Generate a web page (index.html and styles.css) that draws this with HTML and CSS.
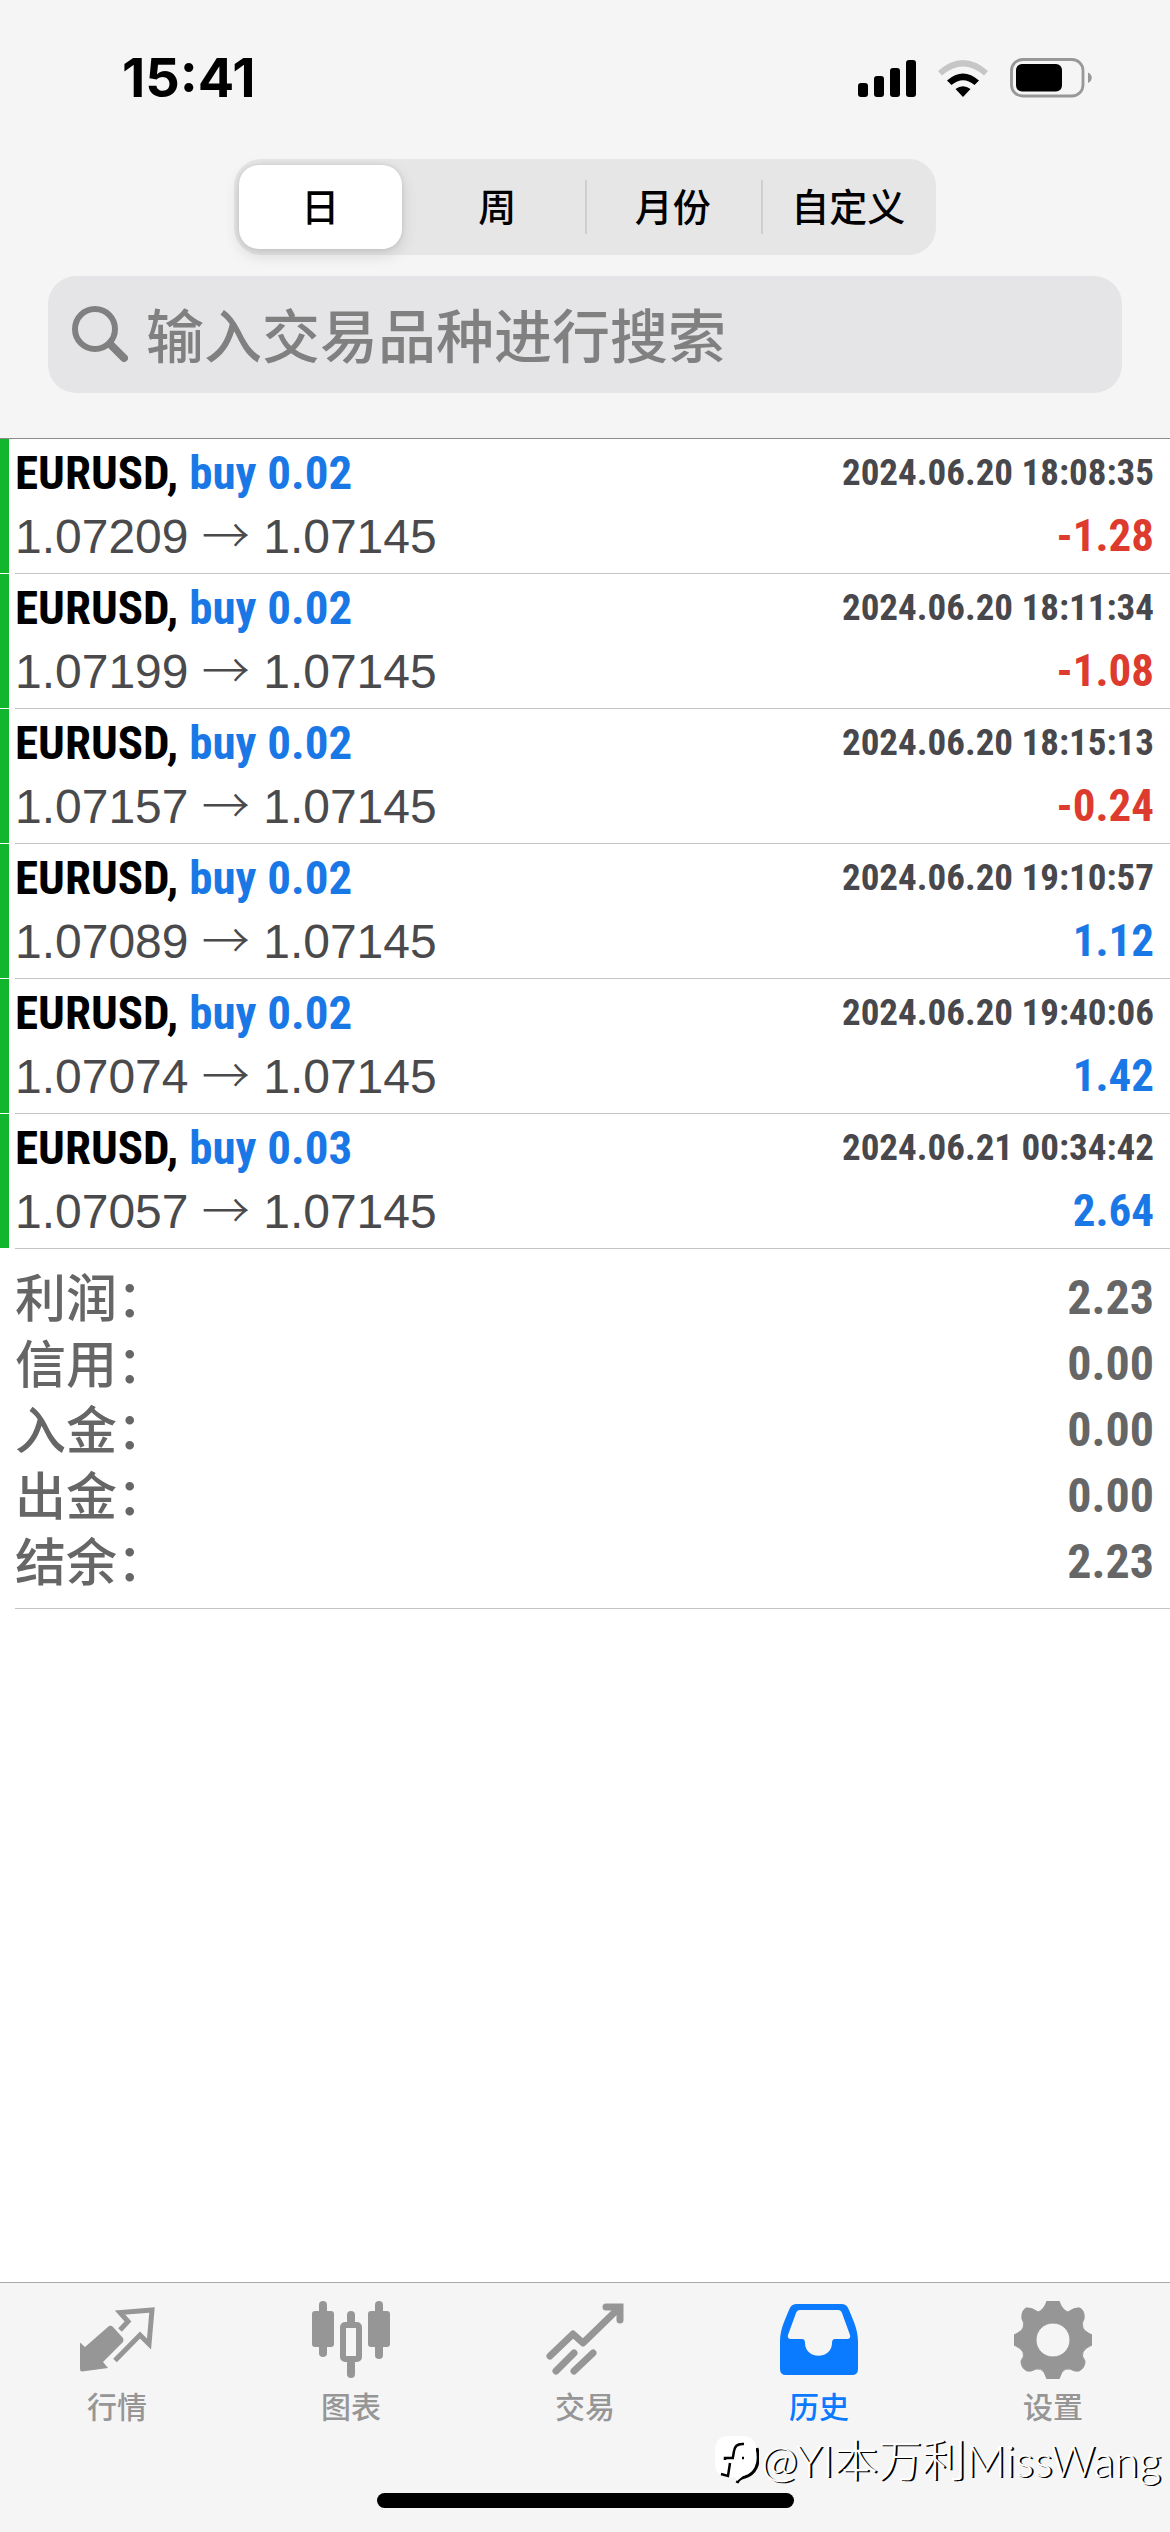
FILE: index.html
```html
<!DOCTYPE html>
<html lang="zh-CN">
<head>
<meta charset="utf-8">
<meta name="viewport" content="width=device-width, initial-scale=1">
<title>历史</title>
<link rel="stylesheet" href="styles.css">
</head>
<body>
<div class="app">
  <header class="header">
    <div class="status">
      <time class="clock">15:41</time>
      <div class="status-icons">
        <svg width="58" height="38" viewBox="0 0 58 38" aria-hidden="true">
          <rect x="0" y="24" width="10" height="14" rx="3"/>
          <rect x="16" y="17" width="10" height="21" rx="3"/>
          <rect x="32" y="9" width="10" height="29" rx="3"/>
          <rect x="48" y="1" width="10" height="37" rx="3"/>
        </svg>
        <svg width="50" height="38" viewBox="0 0 50 38" aria-hidden="true">
          <path d="M0 12Q25 -10 50 12L46 16.500Q25 -1.500 4 16.500Z" fill="#c6c6c6"/>
          <path d="M9 21.500Q25 7.500 41 21.500L36.500 26Q25 16.500 13.500 26Z"/>
          <path d="M17.500 30Q25 24.500 32.500 30L25 38Z"/>
        </svg>
        <svg width="82" height="40" viewBox="0 0 82 40" aria-hidden="true">
          <rect x="1.500" y="1.500" width="71.500" height="36.500" rx="11" fill="none" stroke="#989898" stroke-width="2.800"/>
          <rect x="6" y="6" width="46" height="27.500" rx="6"/>
          <path d="M78 14.500C83 16.500 83 23 78 25Z" fill="#989898"/>
        </svg>
      </div>
    </div>
    <div class="segments" role="group" aria-label="时间范围">
      <button class="segment segment-active" type="button" aria-pressed="true">日</button>
      <button class="segment" type="button">周</button>
      <button class="segment segment-divided" type="button">月份</button>
      <button class="segment segment-divided" type="button">自定义</button>
    </div>
    <label class="search">
      <svg width="56" height="57" viewBox="0 0 56 57" fill="none" stroke="#808080" aria-hidden="true">
        <circle cx="23" cy="23" r="20" stroke-width="6"/>
        <path d="M38 38L52 52" stroke-width="8" stroke-linecap="round"/>
      </svg>
      <input class="search-input" type="search" placeholder="输入交易品种进行搜索" aria-label="输入交易品种进行搜索">
    </label>
  </header>

  <main class="content">
    <ul class="deals">
      <li class="deal"><div class="deal-body">
        <p class="line"><span class="symbol">EURUSD, <span class="side">buy 0.02</span></span><time class="date">2024.06.20 18:08:35</time></p>
        <p class="line"><span class="prices">1.07209 <span class="arrow">→</span> 1.07145</span><span class="profit loss">-1.28</span></p>
      </div></li>
      <li class="deal"><div class="deal-body">
        <p class="line"><span class="symbol">EURUSD, <span class="side">buy 0.02</span></span><time class="date">2024.06.20 18:11:34</time></p>
        <p class="line"><span class="prices">1.07199 <span class="arrow">→</span> 1.07145</span><span class="profit loss">-1.08</span></p>
      </div></li>
      <li class="deal"><div class="deal-body">
        <p class="line"><span class="symbol">EURUSD, <span class="side">buy 0.02</span></span><time class="date">2024.06.20 18:15:13</time></p>
        <p class="line"><span class="prices">1.07157 <span class="arrow">→</span> 1.07145</span><span class="profit loss">-0.24</span></p>
      </div></li>
      <li class="deal"><div class="deal-body">
        <p class="line"><span class="symbol">EURUSD, <span class="side">buy 0.02</span></span><time class="date">2024.06.20 19:10:57</time></p>
        <p class="line"><span class="prices">1.07089 <span class="arrow">→</span> 1.07145</span><span class="profit">1.12</span></p>
      </div></li>
      <li class="deal"><div class="deal-body">
        <p class="line"><span class="symbol">EURUSD, <span class="side">buy 0.02</span></span><time class="date">2024.06.20 19:40:06</time></p>
        <p class="line"><span class="prices">1.07074 <span class="arrow">→</span> 1.07145</span><span class="profit">1.42</span></p>
      </div></li>
      <li class="deal"><div class="deal-body">
        <p class="line"><span class="symbol">EURUSD, <span class="side">buy 0.03</span></span><time class="date">2024.06.21 00:34:42</time></p>
        <p class="line"><span class="prices">1.07057 <span class="arrow">→</span> 1.07145</span><span class="profit">2.64</span></p>
      </div></li>
    </ul>
    <dl class="summary">
      <div class="summary-row"><dt>利润：</dt><dd>2.23</dd></div>
      <div class="summary-row"><dt>信用：</dt><dd>0.00</dd></div>
      <div class="summary-row"><dt>入金：</dt><dd>0.00</dd></div>
      <div class="summary-row"><dt>出金：</dt><dd>0.00</dd></div>
      <div class="summary-row"><dt>结余：</dt><dd>2.23</dd></div>
    </dl>
  </main>

  <footer class="footer">
    <nav class="tabs">
      <a class="tab" href="#quotes">
        <svg width="78" height="78" viewBox="0 0 78 78" aria-hidden="true">
          <path d="M2 41.500L7 46L31 25Q33 24 35 26L45 37Q46 39 45 41L25 61L30 67L4 70.500Q2 70.500 2 68Z" fill="currentColor"/>
          <path d="M42 29L50 20.500L42 11.500L74 9L71 43L62 34L37 59.500" fill="none" stroke="currentColor" stroke-width="5"/>
        </svg>
        行情
      </a>
      <a class="tab" href="#charts">
        <svg width="78" height="78" viewBox="0 0 78 78" fill="currentColor" aria-hidden="true">
          <rect x="0" y="10" width="22" height="36" rx="3"/>
          <rect x="7" y="0" width="8" height="56" rx="4"/>
          <rect x="56" y="10" width="22" height="36" rx="3"/>
          <rect x="63" y="0" width="8" height="58" rx="4"/>
          <rect x="35" y="10" width="8" height="14" rx="4"/>
          <rect x="35" y="58" width="8" height="19" rx="4"/>
          <rect x="31" y="24" width="16" height="34" rx="2" fill="none" stroke="currentColor" stroke-width="6"/>
        </svg>
        图表
      </a>
      <a class="tab" href="#trade">
        <svg width="78" height="78" viewBox="0 0 78 78" fill="none" stroke="currentColor" stroke-width="7" stroke-linecap="round" stroke-linejoin="round" aria-hidden="true">
          <path d="M4 55L27 33L37 42L73 7"/>
          <path d="M60 6H74V19" stroke-linejoin="miter"/>
          <path d="M10 70L28 52"/>
          <path d="M28 70L47 52"/>
        </svg>
        交易
      </a>
      <a class="tab tab-active" href="#history" aria-current="page">
        <svg width="78" height="78" viewBox="0 0 78 78" aria-hidden="true">
          <path d="M16 3H62Q67 3 69 9C74 21 78 29 78 41V68Q78 74 72 74H6Q0 74 0 68V41C0 29 4 21 9 9Q11 3 16 3ZM20 9Q17 9 16 12L8 34Q7 38 11 38H22Q25 38 25 42C25 59 52 59 52 42Q52 38 55 38H67Q71 38 70 34L62 12Q61 9 58 9Z" fill="currentColor" fill-rule="evenodd"/>
        </svg>
        历史
      </a>
      <a class="tab" href="#settings">
        <svg width="78" height="78" viewBox="0 0 78 78" aria-hidden="true">
          <path d="M33 0H45Q48 9 54 11Q61 6 66 7Q71 10 70 18Q67 22 69 27Q70 30 78 34V44Q71 47 69 51Q67 55 71 60Q71 67 65 70Q61 71 56 68Q51 67 48 71L45 78H33L30 71Q27 67 22 68Q17 71 13 70Q7 67 7 60Q11 55 9 51Q7 47 0 44V34Q8 30 9 27Q11 22 8 18Q7 10 12 7Q17 6 24 11Q30 9 33 0ZM39 22A17 17 0 1 0 39 56A17 17 0 1 0 39 22Z" fill="currentColor" fill-rule="evenodd" stroke="currentColor" stroke-width="1" stroke-linejoin="round"/>
        </svg>
        设置
      </a>
    </nav>
    <div class="home-indicator"></div>
    <div class="watermark">
      <svg width="44" height="48" viewBox="0 0 44 48" aria-hidden="true">
        <path d="M42 12C46 28 40 38 30 41Q24 42 22 47" fill="none" stroke="#000" stroke-width="3"/>
        <path d="M12 0H29Q41 1 41 13V25Q39 37 28 40L22 45L20 41Q0 42 0 28V13Q1 1 12 0Z" fill="#fff"/>
        <path d="M29 8Q20 7 19 15L18 21M10 24V22H19M27 22H29M15 27L13 40L6 38" fill="none" stroke="#000" stroke-width="2.500"/>
      </svg>
      <span>@YI本万利MissWang</span>
    </div>
  </footer>
</div>
</body>
</html>
```
FILE: styles.css
```css
* {
  box-sizing: border-box;
}

body {
  margin: 0;
  background: #fff;
  color: #000;
  font-family: "Liberation Sans", "Noto Sans CJK SC", sans-serif;
}

p, ul, dl, dd {
  margin: 0;
  padding: 0;
}

svg {
  display: block;
  flex: none;
}

.app {
  display: flex;
  flex-direction: column;
  min-height: 100vh;
}

/* Header */
.header {
  display: flex;
  flex-direction: column;
  align-items: center;
  padding-bottom: 45px;
  background: #f5f5f5;
  border-bottom: 1px solid #8c8c8c;
}

.status {
  display: flex;
  justify-content: space-between;
  align-items: center;
  width: 100%;
  height: 159px;
  padding: 0 78px 4px 122px;
}

.clock {
  font: 700 54px/60px Inter, sans-serif;
}

.status-icons {
  display: flex;
  align-items: center;
  gap: 22px;
}

.segments {
  display: grid;
  grid-template-columns: repeat(4, 1fr);
  width: 60%;
  height: 96px;
  padding: 6px 0;
  border-radius: 27px;
  background: #e6e6e6;
}

.segment {
  display: flex;
  align-items: center;
  justify-content: center;
  padding: 0 0 4px;
  border: 0;
  background: none;
  color: #000;
  font: 500 38px/48px "Noto Sans CJK SC", sans-serif;
}

.segment-active {
  margin: 0 8px 0 5px;
  border-radius: 20px;
  background: #fff;
  box-shadow: 0 6px 16px rgba(0, 0, 0, 0.12), 0 0 5px rgba(0, 0, 0, 0.1);
}

.segment-divided {
  background: linear-gradient(#cfcfcf, #cfcfcf) left center / 2px 54px no-repeat;
}

.search {
  display: flex;
  align-items: center;
  align-self: stretch;
  gap: 18px;
  height: 117px;
  margin: 21px 48px 0;
  padding: 0 24px;
  border-radius: 28px;
  background: #e5e5e7;
}

.search-input {
  flex: 1;
  min-width: 0;
  padding: 0 0 4px;
  border: 0;
  outline: 0;
  background: none;
  color: #000;
  font: 500 58px/84px "Noto Sans CJK SC", sans-serif;
}

.search-input::placeholder {
  color: #808080;
  opacity: 1;
}

/* Deals */
.content {
  flex: 1;
}

.deals {
  list-style: none;
}

.deal {
  display: flex;
  gap: 6px;
}

.deal::before {
  content: "";
  width: 9px;
  margin-bottom: 1px;
  background: #12b52e;
}

.deal-body {
  flex: 1;
  padding: 2px 16px 6px 0;
  border-bottom: 1px solid #c4c4c6;
}

.line {
  display: flex;
  justify-content: space-between;
  align-items: center;
  height: 63px;
  white-space: nowrap;
}

.symbol {
  font: 700 47px/63px "Roboto Condensed", Roboto, sans-serif;
}

.profit {
  font: 700 45px/63px "Roboto Condensed", Roboto, sans-serif;
}

.side,
.profit {
  color: #1a78e6;
}

.profit.loss {
  color: #de3b2f;
}

.date {
  color: #48484c;
  font: 700 37px/60px "Roboto Condensed", Roboto, sans-serif;
}

.prices {
  padding-bottom: 3px;
  color: #4a4a4c;
  font-size: 48px;
  line-height: 60px;
}

.arrow {
  font-family: "Noto Sans CJK SC", sans-serif;
  font-weight: 300;
}

/* Summary */
.summary {
  margin-left: 15px;
  padding: 16px 16px 13px 0;
  border-bottom: 1px solid #c4c4c6;
}

.summary-row {
  display: flex;
  justify-content: space-between;
  align-items: center;
  height: 66px;
  color: #666;
}

.summary-row dt {
  padding-bottom: 6px;
  font: 500 51px/60px "Noto Sans CJK SC", sans-serif;
}

.summary-row dd {
  font: 700 48px/66px "Roboto Condensed", Roboto, sans-serif;
}

/* Tab bar */
.footer {
  position: relative;
  padding: 18px 0 24px;
  border-top: 1px solid #a8a8a8;
  background: #f5f5f5;
}

.tabs {
  display: grid;
  grid-template-columns: repeat(5, 1fr);
}

.tab {
  display: flex;
  flex-direction: column;
  align-items: center;
  gap: 4px;
  color: #969696;
  font: 500 30px/44px "Noto Sans CJK SC", sans-serif;
  text-decoration: none;
}

.tab-active {
  color: #0a7aff;
}

.home-indicator {
  width: 417px;
  height: 15px;
  margin: 66px auto 0;
  border-radius: 8px;
  background: #000;
}

.watermark {
  position: absolute;
  right: 9px;
  bottom: 42px;
  display: flex;
  align-items: center;
  gap: 2px;
  color: #fff;
  font: 300 44px/60px Lato, "Noto Sans CJK SC", sans-serif;
  text-shadow: 2px 1px 0 #000;
  white-space: nowrap;
}
```
